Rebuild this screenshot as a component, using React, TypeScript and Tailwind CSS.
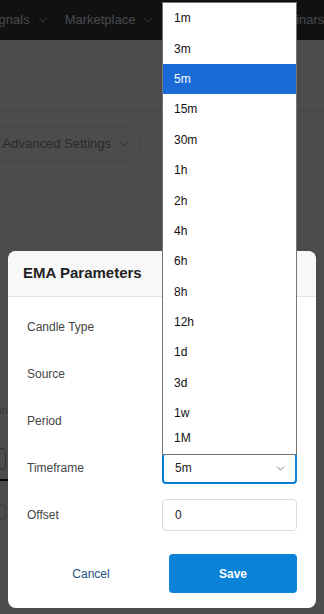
import { ChevronDown } from "lucide-react";

const OPTIONS = ["1m", "3m", "5m", "15m", "30m", "1h", "2h", "4h", "6h", "8h", "12h", "1d", "3d", "1w", "1M"];

const FIELDS = ["Candle Type", "Source", "Period", "Timeframe", "Offset"];

function Field({ label }: { label: string }) {
  let control = (
    <div className="w-[135px] h-[32px] rounded border border-[#dcdcdc] bg-white flex items-center px-[12px] text-[12px] text-[#222]">
      {label === "Offset" ? "0" : ""}
    </div>
  );
  if (label === "Timeframe") {
    control = (
      <div className="w-[135px] h-[32px] rounded-[4px] border-2 border-[#0a7fd8] bg-white flex items-center justify-between pl-[11px] pr-[8px] text-[12px] text-[#222]">
        <span>5m</span>
        <ChevronDown size={13} strokeWidth={1.6} className="text-[#666]" />
      </div>
    );
  }
  return (
    <div className="flex items-center h-[32px]">
      <div className="flex-1 text-[12px] text-[#444]">{label}</div>
      {control}
    </div>
  );
}

export default function App() {
  return (
    <div className="relative w-[324px] h-[614px] overflow-hidden bg-white font-['Liberation_Sans',Arial,sans-serif]">
      {/* page behind the modal */}
      <div className="flex items-center h-[40px] bg-[#393939] text-[13px] text-[#e9f3ff] whitespace-nowrap">
        <div className="flex items-center gap-[6px] ml-[-13px]">
          <span>Signals</span>
          <ChevronDown size={14} strokeWidth={1.5} />
        </div>
        <div className="flex items-center gap-[6px] ml-[15px]">
          <span>Marketplace</span>
          <ChevronDown size={14} strokeWidth={1.5} />
        </div>
        <div className="flex items-center gap-[6px] ml-[20px]">
          <span>Academy</span>
          <ChevronDown size={14} strokeWidth={1.5} />
        </div>
        <div className="ml-[20px]">Webinars</div>
      </div>
      <div className="h-[71px] border-b border-[#e6e6e6]" />
      <div className="mt-[15px] ml-[-20px] w-[162px] h-[35px] rounded-full border border-[#e9e9e9] flex items-center justify-end gap-[6px] pr-[10px] text-[13px] text-[#8c8c8c]">
        <span>Advanced Settings</span>
        <ChevronDown size={14} strokeWidth={1.5} />
      </div>
      <div className="mt-[242px] ml-[-10px] text-[10px] text-[#bbb]">Func</div>
      <div className="mt-[30px] ml-[-14px] w-[20px] h-[22px] rounded border border-[#b59b7a]" />
      <div className="mt-[9px] h-[2px] w-[10px] bg-[#111]" />
      <div className="mt-[23px] ml-[-14px] w-[20px] h-[16px] rounded border border-[#ccc]" />

      {/* overlay + modal */}
      <div className="absolute inset-0 bg-black/70 flex flex-col justify-end px-[8px] pb-[6px]">
        <div className="bg-white rounded-[8px] overflow-hidden">
          <div className="h-[46px] bg-[#f8f8f8] border-b border-[#e4e4e4] flex items-center px-[15px] text-[15px] font-bold text-[#222]">
            EMA Parameters
          </div>
          <div className="flex flex-col gap-[15px] px-[19px] pt-[14px]">
            {FIELDS.map((f) => (
              <Field key={f} label={f} />
            ))}
          </div>
          <div className="grid grid-cols-2 gap-[14px] px-[19px] pt-[23px] pb-[15px]">
            <button className="h-[39px] text-[12px] text-[#1c4f7c]">Cancel</button>
            <button className="h-[39px] rounded-[4px] bg-[#0a82d8] text-[12px] font-bold text-white">Save</button>
          </div>
        </div>
      </div>

      {/* open native select list */}
      <div className="absolute left-[162px] top-[2px] w-[135px] h-[453px] border border-[#767676] bg-white overflow-hidden">
        {OPTIONS.map((o) => (
          <div
            key={o}
            className={
              o === "5m"
                ? "h-[30.4px] flex items-center pl-[11px] text-[12px] bg-[#1a6bd5] text-white"
                : o === "1M"
                ? "h-[20px] flex items-center pl-[11px] text-[12px] text-[#111]"
                : "h-[30.4px] flex items-center pl-[11px] text-[12px] text-[#111]"
            }
          >
            {o}
          </div>
        ))}
      </div>
    </div>
  );
}
